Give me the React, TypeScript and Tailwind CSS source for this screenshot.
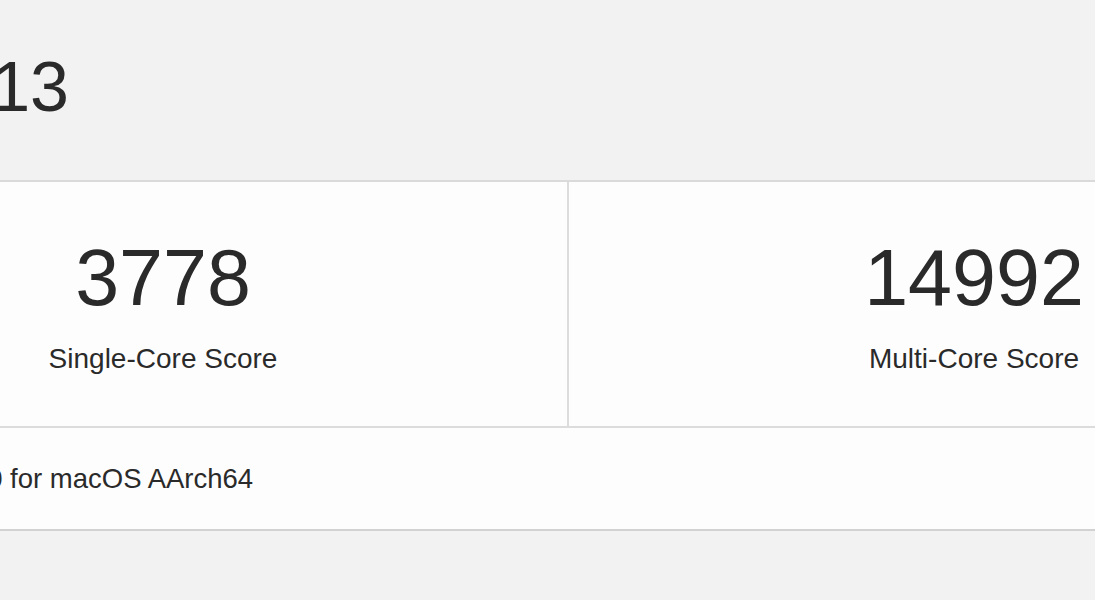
export default function App() {
  return (
    <div className="min-h-screen overflow-hidden bg-[#f2f2f2] font-['Liberation_Sans',Arial,sans-serif] text-[#2a2a2a]">
      <div className="ml-[-241px] w-[1620px]">
        {/* page header */}
        <div className="flex h-[180px] pt-[52px]">
          <div className="flex w-[310px] justify-end">
            <h1 className="whitespace-nowrap text-[70px] leading-none font-normal">Mac15,13</h1>
          </div>
        </div>

        {/* score card */}
        <div className="border-t-2 border-b-2 border-t-[#dadada] border-b-[#d2d2d2] bg-[#fdfdfd]">
          <div className="grid grid-cols-2 border-b-2 border-[#dcdcdc]">
            <div className="flex h-[244px] flex-col items-center border-r-2 border-[#dcdcdc] pt-[56px]">
              <div className="text-[79px] leading-none">3778</div>
              <div className="mt-[28px] text-[28px] leading-none">Single-Core Score</div>
            </div>
            <div className="flex h-[244px] flex-col items-center pt-[56px]">
              <div className="text-[79px] leading-none">14992</div>
              <div className="mt-[28px] text-[28px] leading-none">Multi-Core Score</div>
            </div>
          </div>
          <div className="h-[101px] pl-[34px] pt-[37px] text-[27.5px] leading-none">
            Geekbench 6.3.0 for macOS AArch64
          </div>
        </div>
      </div>
    </div>
  );
}
